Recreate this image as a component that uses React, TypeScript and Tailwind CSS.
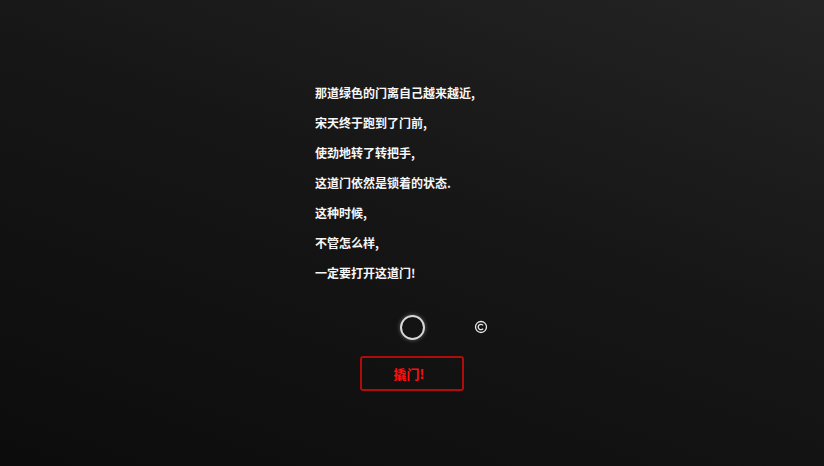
const lines = [
  "那道绿色的门离自己越来越近,",
  "宋天终于跑到了门前,",
  "使劲地转了转把手,",
  "这道门依然是锁着的状态.",
  "这种时候,",
  "不管怎么样,",
  "一定要打开这道门!",
];

export default function App() {
  return (
    <div
      className="flex h-[466px] w-[824px] flex-col items-center bg-[linear-gradient(200deg,#242424_0%,#161616_45%,#0c0c0c_100%)] pt-[78px]"
      style={{ fontFamily: '"Noto Sans CJK SC", "Noto Sans", sans-serif' }}
    >
      <div className="w-[194px] text-[12px] font-bold leading-[30px] text-[#f7f7f7]">
        {lines.map((l) => (
          <p key={l} className="whitespace-nowrap">
            {l}
          </p>
        ))}
      </div>

      <div className="relative mt-[27px] flex h-[25px] w-[25px] items-center justify-center">
        <div className="h-[25px] w-[25px] rounded-full border-2 border-[#d8d8d8] shadow-[0_0_4px_rgba(255,255,255,0.35)]" />
        <svg
          className="absolute left-[74px] top-[5px]"
          width="14"
          height="14"
          viewBox="0 0 14 14"
        >
          <circle cx="7" cy="7" r="5.5" fill="none" stroke="#e6e6e6" strokeWidth="1.3" />
          <path
            d="M9.1 5.4 A2.7 2.7 0 1 0 9.1 8.6"
            fill="none"
            stroke="#e6e6e6"
            strokeWidth="1.3"
          />
        </svg>
      </div>

      <button
        type="button"
        className="mt-[16px] flex h-[35px] w-[104px] items-center justify-center rounded-[3px] border-2 border-[#b00c0c] bg-transparent pr-[6px] text-[13px] font-bold text-[#ff1010]"
      >
        撬门!
      </button>
    </div>
  );
}
